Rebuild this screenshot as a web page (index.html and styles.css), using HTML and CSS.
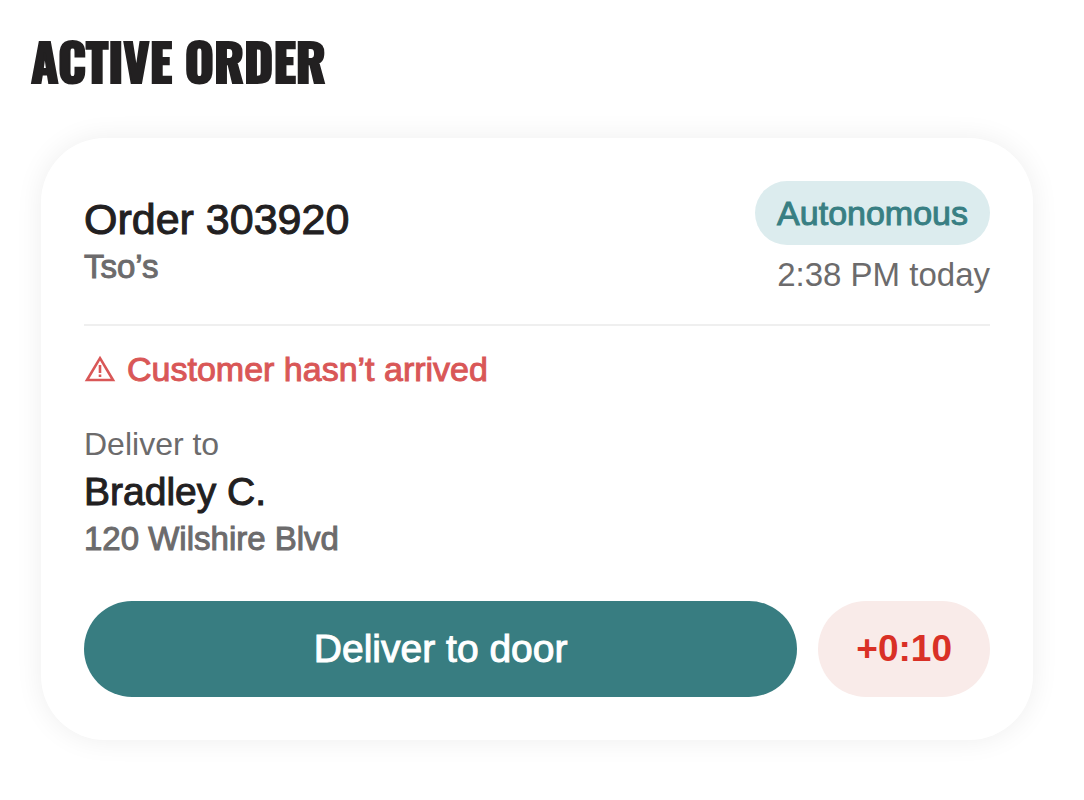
FILE: index.html
```
<!DOCTYPE html>
<html lang="en">
<head>
  <meta charset="UTF-8" />
  <meta name="viewport" content="width=device-width, initial-scale=1.0"/>
  <title>Active Order</title>
  <link rel="stylesheet" href="styles.css">
</head>
<body>

  <main class="page">
    <h1 class="page-title">ACTIVE ORDER</h1>

    <section class="order-card">
      <header class="order-header">
        <div class="order-info">
          <h2 class="order-number">Order 303920</h2>
          <p class="restaurant">Tso’s</p>
        </div>
        <div class="order-meta">
          <span class="badge">Autonomous</span>
          <time class="order-time">2:38 PM today</time>
        </div>
      </header>

      <p class="alert">
        <svg class="alert-icon" viewBox="0 0 32 28" aria-hidden="true">
          <path d="M16 3.2 L29 25 H3 Z" fill="none" stroke="currentColor" stroke-width="2.6" stroke-linejoin="miter"/>
          <path d="M16 10 V18 M16 19.6 V22" fill="none" stroke="currentColor" stroke-width="2.6"/>
        </svg>
        Customer hasn’t arrived
      </p>

      <div class="customer">
        <p class="label">Deliver to</p>
        <p class="name">Bradley C.</p>
        <p class="address">120 Wilshire Blvd</p>
      </div>

      <div class="actions">
        <button type="button" class="deliver-btn">Deliver to door</button>
        <button type="button" class="timer-btn">+0:10</button>
      </div>
    </section>
  </main>

</body>
</html>
```
FILE: styles.css
```
* {
  box-sizing: border-box;
}

body {
  margin: 0;
  background-color: #fff;
  color: #222021;
  font-family: "Liberation Sans", Arial, sans-serif;
  font-size: 33px;
}

h1, h2, p {
  margin: 0;
  font-weight: normal;
}

.page {
  padding: 32px 51px 60px 41px;
}

.page-title {
  margin: 0 0 50px -10px;
  font-family: "Oswald", "Roboto Condensed", "Open Sans Condensed", "Liberation Sans Narrow", sans-serif;
  font-size: 50px;
  font-weight: bold;
  line-height: 56px;
  -webkit-text-stroke: 2px;
}

.order-card {
  padding: 43px;
  border-radius: 64px;
  background-color: #fff;
  box-shadow: 0 0 28px rgba(0, 0, 0, 0.07);
}

.order-header {
  display: flex;
  justify-content: space-between;
  padding-bottom: 27px;
  border-bottom: 2px solid #efefef;
}

.order-info {
  padding-top: 12px;
}

.order-number {
  font-size: 43px;
  line-height: 52px;
  -webkit-text-stroke: 1px;
}

.restaurant {
  color: #6c6b6c;
  line-height: 44px;
  -webkit-text-stroke: 1px;
}

.order-meta {
  display: flex;
  flex-direction: column;
  align-items: flex-end;
  gap: 8px;
}

.badge {
  padding: 0 22px;
  border-radius: 32px;
  background-color: #dcecee;
  color: #387f83;
  font-size: 34px;
  line-height: 64px;
  -webkit-text-stroke: 1px;
}

.order-time {
  color: #6c6b6c;
  line-height: 44px;
}

.alert {
  display: flex;
  align-items: center;
  gap: 11px;
  margin-top: 21px;
  color: #d95757;
  font-size: 34px;
  line-height: 44px;
  -webkit-text-stroke: 1px;
}

.alert-icon {
  width: 32px;
  height: 28px;
}

.customer {
  margin-top: 30px;
  color: #6c6b6c;
  line-height: 47px;
}

.label {
  font-size: 32px;
}

.name {
  color: #222021;
  font-size: 39px;
  -webkit-text-stroke: 1px;
}

.address {
  -webkit-text-stroke: 1px;
}

.actions {
  display: flex;
  gap: 21px;
  margin-top: 39px;
}

button {
  height: 96px;
  border: none;
  border-radius: 48px;
  font-family: inherit;
  font-size: 39px;
  cursor: pointer;
}

.deliver-btn {
  flex: 1;
  background-color: #387d81;
  color: #fff;
  -webkit-text-stroke: 1px;
}

.timer-btn {
  padding: 0 38px;
  background-color: #f9ebe9;
  color: #d93026;
  font-size: 37px;
  font-weight: bold;
}
```
